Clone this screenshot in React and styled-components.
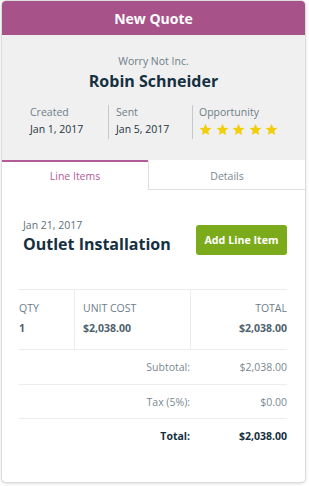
import React from "react";
import styled, { createGlobalStyle } from "styled-components";

const Global = createGlobalStyle`
  html, body { margin: 0; padding: 0; background: #ffffff; }
  body { font-family: "Open Sans", "Noto Sans", sans-serif; }
  * { box-sizing: border-box; }
`;

const Page = styled.div`
  padding: 0 3px 4px 1px;
`;

const Card = styled.div`
  border: 1px solid #dcdcdc;
  border-radius: 5px;
  overflow: hidden;
  background: #fff;
  box-shadow: 0 1px 3px rgba(0, 0, 0, 0.12);
  padding-bottom: 29px;
`;

const Header = styled.div`
  background: #a8528a;
  color: #fff;
  height: 34px;
  display: flex;
  align-items: center;
  justify-content: center;
  font-size: 14px;
  font-weight: 700;
`;

const Summary = styled.div`
  background: #f0f0f0;
  padding: 19px 20px 21px 20px;
  display: flex;
  flex-direction: column;
  align-items: center;
`;

const Company = styled.div`
  font-size: 10.5px;
  color: #6e7d87;
  line-height: 15px;
`;

const Name = styled.div`
  font-size: 16px;
  font-weight: 700;
  color: #15303f;
  line-height: 24px;
`;

const Stats = styled.div`
  align-self: stretch;
  display: grid;
  grid-template-columns: 86px 84px 1fr;
  margin-top: 12px;
`;

const Stat = styled.div`
  padding-left: ${(p) => p.$pad}px;
  border-left: ${(p) => (p.$first ? "none" : "1px solid #c3c9cd")};
  height: 34px;
`;

const StatLabel = styled.div`
  font-size: 10.5px;
  color: #6e7d87;
  line-height: 15px;
`;

const StatValue = styled.div`
  font-size: 10.5px;
  color: #1f3442;
  line-height: 18px;
`;

const Stars = styled.div`
  display: flex;
  gap: 3.5px;
  margin-top: 3px;
`;

const Tabs = styled.div`
  display: grid;
  grid-template-columns: 146px 1fr;
  background: #f0f0f0;
`;

const Tab = styled.div`
  height: 30px;
  display: flex;
  align-items: center;
  justify-content: center;
  font-size: 10.5px;
  background: #fff;
  color: ${(p) => (p.$active ? "#b25d98" : "#7a8893")};
  border-top: 2px solid ${(p) => (p.$active ? "#b25d98" : "#fff")};
  border-left: ${(p) => (p.$active ? "none" : "1px solid #dedede")};
  border-bottom: ${(p) => (p.$active ? "none" : "1px solid #dedede")};
`;

const Body = styled.div`
  padding: 0 18px 0 17px;
`;

const ItemHead = styled.div`
  display: flex;
  justify-content: space-between;
  align-items: flex-start;
  padding: 28px 0 33px 4px;
`;

const ItemDate = styled.div`
  font-size: 10.5px;
  color: #5f6f7a;
  line-height: 14px;
`;

const ItemTitle = styled.div`
  font-size: 16px;
  font-weight: 700;
  color: #15303f;
  line-height: 24px;
`;

const AddButton = styled.button`
  font-family: inherit;
  background: #7bab1a;
  color: #fff;
  border: none;
  border-radius: 3px;
  width: 91px;
  height: 30px;
  font-size: 10.7px;
  font-weight: 700;
  padding: 0;
  margin-top: 7px;
`;

const Table = styled.div`
  display: grid;
  grid-template-columns: 55px 116px 1fr;
  border-top: 1px solid #ececec;
`;

const Cell = styled.div`
  padding: 9px ${(p) => (p.$right ? "0" : "8px")} 10px ${(p) => (p.$first ? "0" : "8px")};
  border-left: ${(p) => (p.$first ? "none" : "1px solid #ececec")};
  text-align: ${(p) => (p.$right ? "right" : "left")};
  border-bottom: 1px solid #ececec;
`;

const ColHead = styled.div`
  font-size: 10.5px;
  color: #6e7d87;
  line-height: 18px;
`;

const ColValue = styled.div`
  font-size: 10.5px;
  font-weight: 700;
  color: #4f626e;
  line-height: 22px;
`;

const TotalRow = styled.div`
  display: grid;
  grid-template-columns: 1fr 97px;
  align-items: center;
  height: ${(p) => p.$h}px;
  border-bottom: ${(p) => (p.$last ? "none" : "1px solid #ececec")};
  font-size: 10.5px;
  color: ${(p) => (p.$strong ? "#15303f" : "#7a8893")};
  font-weight: ${(p) => (p.$strong ? 700 : 400)};
`;

const TotalLabel = styled.div`
  text-align: right;
`;

const TotalValue = styled.div`
  text-align: right;
`;

const Star = () => (
  <svg width="13" height="13" viewBox="0 0 24 24">
    <path
      fill="#f2cf0e"
      d="M12 1.5l3.1 7.2 7.8.7-5.9 5.2 1.8 7.7L12 18.3l-6.8 4 1.8-7.7-5.9-5.2 7.8-.7z"
    />
  </svg>
);

export default function App() {
  return (
    <Page>
      <Global />
      <Card>
        <Header>New Quote</Header>
        <Summary>
          <Company>Worry Not Inc.</Company>
          <Name>Robin Schneider</Name>
          <Stats>
            <Stat $first $pad={8}>
              <StatLabel>Created</StatLabel>
              <StatValue>Jan 1, 2017</StatValue>
            </Stat>
            <Stat $pad={7}>
              <StatLabel>Sent</StatLabel>
              <StatValue>Jan 5, 2017</StatValue>
            </Stat>
            <Stat $pad={6}>
              <StatLabel>Opportunity</StatLabel>
              <Stars>
                {[0, 1, 2, 3, 4].map((i) => (
                  <Star key={i} />
                ))}
              </Stars>
            </Stat>
          </Stats>
        </Summary>
        <Tabs>
          <Tab $active>Line Items</Tab>
          <Tab>Details</Tab>
        </Tabs>
        <Body>
          <ItemHead>
            <div>
              <ItemDate>Jan 21, 2017</ItemDate>
              <ItemTitle>Outlet Installation</ItemTitle>
            </div>
            <AddButton>Add Line Item</AddButton>
          </ItemHead>
          <Table>
            <Cell $first>
              <ColHead>QTY</ColHead>
              <ColValue>1</ColValue>
            </Cell>
            <Cell>
              <ColHead>UNIT COST</ColHead>
              <ColValue>$2,038.00</ColValue>
            </Cell>
            <Cell $right>
              <ColHead>TOTAL</ColHead>
              <ColValue>$2,038.00</ColValue>
            </Cell>
          </Table>
          <TotalRow $h={35}>
            <TotalLabel>Subtotal:</TotalLabel>
            <TotalValue>$2,038.00</TotalValue>
          </TotalRow>
          <TotalRow $h={34}>
            <TotalLabel>Tax (5%):</TotalLabel>
            <TotalValue>$0.00</TotalValue>
          </TotalRow>
          <TotalRow $h={34} $strong $last>
            <TotalLabel>Total:</TotalLabel>
            <TotalValue>$2,038.00</TotalValue>
          </TotalRow>
        </Body>
      </Card>
    </Page>
  );
}
